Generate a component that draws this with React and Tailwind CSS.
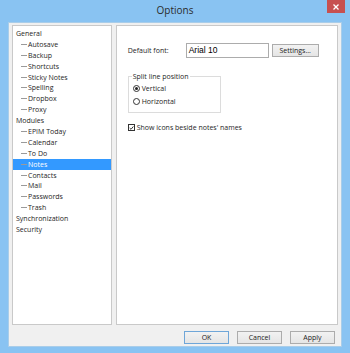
import React from "react";

const tree = [
  { t: "General", l: 0 },
  { t: "Autosave", l: 1 },
  { t: "Backup", l: 1 },
  { t: "Shortcuts", l: 1 },
  { t: "Sticky Notes", l: 1 },
  { t: "Spelling", l: 1 },
  { t: "Dropbox", l: 1 },
  { t: "Proxy", l: 1 },
  { t: "Modules", l: 0 },
  { t: "EPIM Today", l: 1 },
  { t: "Calendar", l: 1 },
  { t: "To Do", l: 1 },
  { t: "Notes", l: 1, sel: true },
  { t: "Contacts", l: 1 },
  { t: "Mail", l: 1 },
  { t: "Passwords", l: 1 },
  { t: "Trash", l: 1 },
  { t: "Synchronization", l: 0 },
  { t: "Security", l: 0 },
];

function Btn({ children, w = "w-[45px]", def }) {
  return (
    <div
      className={`${w} h-[13px] flex items-center justify-center border ${
        def ? "border-[#6fa6d8]" : "border-[#acacac]"
      } bg-gradient-to-b from-[#f2f2f2] to-[#e5e5e5] text-[#222]`}
    >
      {children}
    </div>
  );
}

export default function App() {
  return (
    <div
      className="w-[350px] h-[353px] bg-[#89c3f2] flex flex-col text-[7px] leading-none text-[#1e1e1e]"
      style={{ fontFamily: '"Open Sans", "Noto Sans", sans-serif' }}
    >
      {/* title bar */}
      <div className="h-[22px] grid grid-cols-[1fr_auto_1fr] items-start shrink-0">
        <div />
        <div className="pt-[5px] text-[10px] text-[#2b2b2b]">Options</div>
        <div className="flex justify-end pr-[5px]">
          <div className="w-[18px] h-[13px] bg-[#c75050] flex items-center justify-center">
            <svg width="6" height="6" viewBox="0 0 6 6">
              <path d="M0.5 0.5 L5.5 5.5 M5.5 0.5 L0.5 5.5" stroke="#fff" strokeWidth="1.3" />
            </svg>
          </div>
        </div>
      </div>
      {/* client */}
      <div className="flex-1 mx-[8px] mb-[6px] bg-[#f0f0f0] border border-[#a9cde9] flex flex-col px-[3px] pt-[2px]">
        <div className="flex gap-[4px] h-[300px]">
          {/* tree */}
          <div className="w-[100px] h-full bg-white border border-[#c9c9c9] pt-[2px]">
            {tree.map((r) => (
              <div
                key={r.t}
                className={`h-[10.9px] flex items-center ${
                  r.sel ? "bg-[#3399ff] text-white" : ""
                }`}
              >
                {r.l === 1 ? (
                  <>
                    <div className="ml-[8px] w-[6px] h-px bg-[#9a9a9a]" />
                    <span className="ml-[1px]">{r.t}</span>
                  </>
                ) : (
                  <span className="ml-[3px]">{r.t}</span>
                )}
              </div>
            ))}
          </div>
          {/* panel */}
          <div className="w-[223px] h-full bg-white border border-[#c9c9c9] pl-[11px] pt-[17px]">
            <div className="flex items-center h-[15px]">
              <span className="w-[58px]">Default font:</span>
              <div
                className="w-[83px] h-[15px] border border-[#acacac] flex items-center pl-[2px] text-[8.5px] text-black"
                style={{ fontFamily: '"Liberation Sans", Arial, sans-serif' }}
              >
                Arial 10
              </div>
              <div className="ml-[3px]">
                <Btn w="w-[47px]">Settings...</Btn>
              </div>
            </div>
            <div className="mt-[18px] w-[93px] h-[37px] border border-[#dcdcdc] relative">
              <span className="absolute -top-[4px] left-[3px] bg-white px-px">
                Split line position
              </span>
              <div className="pt-[8px] pl-[4px] flex flex-col gap-[6px]">
                <div className="flex items-center gap-[2px]">
                  <div className="w-[7px] h-[7px] rounded-full border border-[#333] flex items-center justify-center">
                    <div className="w-[3px] h-[3px] rounded-full bg-[#222]" />
                  </div>
                  <span>Vertical</span>
                </div>
                <div className="flex items-center gap-[2px]">
                  <div className="w-[7px] h-[7px] rounded-full border border-[#333]" />
                  <span>Horizontal</span>
                </div>
              </div>
            </div>
            <div className="mt-[11px] flex items-center gap-[2px]">
              <div className="w-[7px] h-[7px] border border-[#333] flex items-center justify-center">
                <svg width="6" height="6" viewBox="0 0 6 6">
                  <path d="M0.8 3 L2.4 4.6 L5.2 1.2" stroke="#222" strokeWidth="1.1" fill="none" />
                </svg>
              </div>
              <span>Show icons beside notes' names</span>
            </div>
          </div>
        </div>
        <div className="flex justify-end gap-[8px] mt-[6px] pr-[3px]">
          <Btn def>OK</Btn>
          <Btn>Cancel</Btn>
          <Btn>Apply</Btn>
        </div>
      </div>
    </div>
  );
}
